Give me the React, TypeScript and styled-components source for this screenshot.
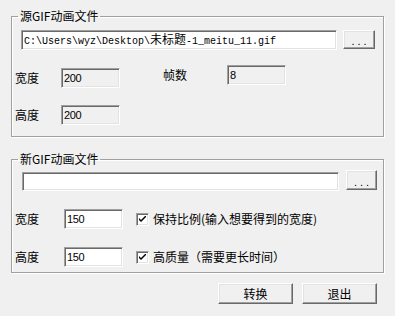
import React from 'react';
import styled, { createGlobalStyle } from 'styled-components';

const GlobalStyle = createGlobalStyle`
  html, body {
    margin: 0;
    padding: 0;
    background: #f0f0f0;
  }
  body {
    font-family: 'Noto Sans CJK SC', 'Liberation Sans', sans-serif;
    font-size: 12px;
    color: #000;
  }
`;

const Dialog = styled.div`
  width: 395px;
  height: 316px;
  box-sizing: border-box;
  padding: 9px 0 0 11px;
  background: #f0f0f0;
`;

const Group = styled.fieldset<{ $top?: number; $bottom: number }>`
  box-sizing: border-box;
  width: 373px;
  min-inline-size: 0;
  margin: ${(p) => p.$top ?? 0}px 0 0 0;
  padding: 0 0 ${(p) => p.$bottom}px 3px;
  border: 1px solid #a0a0a0;
  box-shadow: inset 1px 1px 0 #fff, 1px 1px 0 #fff;
`;

const Legend = styled.legend`
  margin-left: 3px;
  padding: 0 2px;
  font-size: 12px;
  line-height: 14px;
`;

const PathRow = styled.div<{ $top: number; $left: number; $gap: number }>`
  display: flex;
  align-items: flex-start;
  gap: ${(p) => p.$gap}px;
  margin: ${(p) => p.$top}px 0 0 ${(p) => p.$left}px;
`;

const Edit = styled.div<{ $w: number; $h?: number; $readOnly?: boolean; $top?: number }>`
  box-sizing: border-box;
  width: ${(p) => p.$w}px;
  height: ${(p) => p.$h ?? 20}px;
  margin-top: ${(p) => p.$top ?? 0}px;
  padding: 0 2px;
  display: flex;
  align-items: center;
  white-space: nowrap;
  overflow: hidden;
  background: ${(p) => (p.$readOnly ? '#f0f0f0' : '#fff')};
  border: 1px solid;
  border-color: #a0a0a0 #fff #fff #a0a0a0;
  box-shadow: inset 1px 1px 0 #696969, inset -1px -1px 0 #e3e3e3;
`;

const PathText = styled.span`
  font-family: 'Liberation Mono', 'Noto Sans CJK SC', monospace;
  font-size: 10px;
  line-height: 14px;
`;

const Cjk = styled.span`
  font-family: 'Noto Sans CJK SC', sans-serif;
  font-size: 12px;
`;

const Num = styled.span`
  font-family: 'Liberation Sans', Arial, sans-serif;
  font-size: 11px;
  letter-spacing: -0.4px;
  line-height: 14px;
`;

const Button = styled.button<{ $w: number; $h: number; $top?: number }>`
  box-sizing: border-box;
  width: ${(p) => p.$w}px;
  height: ${(p) => p.$h}px;
  margin-top: ${(p) => p.$top ?? 0}px;
  padding: 0;
  background: #f0f0f0;
  font-family: 'Noto Sans CJK SC', 'Liberation Sans', sans-serif;
  font-size: 12px;
  color: #000;
  border: 1px solid;
  border-color: #fff #696969 #696969 #fff;
  box-shadow: inset -1px -1px 0 #a0a0a0, inset 1px 1px 0 #e3e3e3;
  display: flex;
  align-items: center;
  justify-content: center;
`;

const Dots = styled.span`
  font-family: 'Liberation Sans', sans-serif;
  font-size: 11px;
  letter-spacing: 3px;
  margin: 3px 0 0 3px;
`;

const FieldRow = styled.div<{ $top: number }>`
  display: flex;
  align-items: flex-start;
  margin-top: ${(p) => p.$top}px;
`;

const Pair = styled.div<{ $top?: number; $left?: number }>`
  display: flex;
  align-items: center;
  margin-top: ${(p) => p.$top ?? 0}px;
  margin-left: ${(p) => p.$left ?? 0}px;
`;

const Label = styled.span<{ $w: number }>`
  width: ${(p) => p.$w}px;
  font-size: 12px;
  line-height: 14px;
`;

const CheckWrap = styled.label<{ $left: number }>`
  display: flex;
  align-items: center;
  gap: 4px;
  margin-left: ${(p) => p.$left}px;
  font-size: 12px;
  line-height: 14px;
`;

const Box = styled.span`
  box-sizing: border-box;
  width: 13px;
  height: 13px;
  background: #fff;
  border: 1px solid;
  border-color: #a0a0a0 #fff #fff #a0a0a0;
  box-shadow: inset 1px 1px 0 #696969, inset -1px -1px 0 #e3e3e3;
  display: flex;
  align-items: center;
  justify-content: center;
`;

const Footer = styled.div`
  width: 373px;
  display: flex;
  justify-content: flex-end;
  gap: 9px;
  padding-right: 7px;
  box-sizing: border-box;
  margin-top: 10px;
`;

const Check = ({ text, left }: { text: string; left: number }) => (
  <CheckWrap $left={left}>
    <Box>
      <svg width="7" height="7" viewBox="0 0 7 7">
        <path d="M0 2 L0 4 L2 6 L7 1 L7 -1 L2 4 Z" fill="#000" />
      </svg>
    </Box>
    {text}
  </CheckWrap>
);

export default function App() {
  return (
    <>
      <GlobalStyle />
      <Dialog>
        <Group $bottom={11}>
          <Legend>源GIF动画文件</Legend>
          <PathRow $top={7} $left={6} $gap={6}>
            <Edit $w={316}>
              <PathText>
                C:\Users\wyz\Desktop\<Cjk>未标题</Cjk>-1_meitu_11.gif
              </PathText>
            </Edit>
            <Button $w={32} $h={19}>
              <Dots>...</Dots>
            </Button>
          </PathRow>
          <FieldRow $top={15}>
            <Pair $top={3}>
              <Label $w={46}>宽度</Label>
              <Edit $w={59} $readOnly>
                <Num>200</Num>
              </Edit>
            </Pair>
            <Pair $left={43}>
              <Label $w={64}>帧数</Label>
              <Edit $w={59} $readOnly>
                <Num>8</Num>
              </Edit>
            </Pair>
          </FieldRow>
          <FieldRow $top={17}>
            <Pair>
              <Label $w={46}>高度</Label>
              <Edit $w={59} $readOnly>
                <Num>200</Num>
              </Edit>
            </Pair>
          </FieldRow>
        </Group>

        <Group $top={15} $bottom={5}>
          <Legend>新GIF动画文件</Legend>
          <PathRow $top={4} $left={7} $gap={7}>
            <Edit $w={317} $h={19} $top={2} />
            <Button $w={31} $h={20}>
              <Dots>...</Dots>
            </Button>
          </PathRow>
          <FieldRow $top={18}>
            <Pair>
              <Label $w={49}>宽度</Label>
              <Edit $w={59}>
                <Num>150</Num>
              </Edit>
              <Check left={13} text="保持比例(输入想要得到的宽度)" />
            </Pair>
          </FieldRow>
          <FieldRow $top={18}>
            <Pair>
              <Label $w={49}>高度</Label>
              <Edit $w={59}>
                <Num>150</Num>
              </Edit>
              <Check left={13} text="高质量（需要更长时间）" />
            </Pair>
          </FieldRow>
        </Group>

        <Footer>
          <Button $w={75} $h={21}>转换</Button>
          <Button $w={75} $h={21}>退出</Button>
        </Footer>
      </Dialog>
    </>
  );
}
